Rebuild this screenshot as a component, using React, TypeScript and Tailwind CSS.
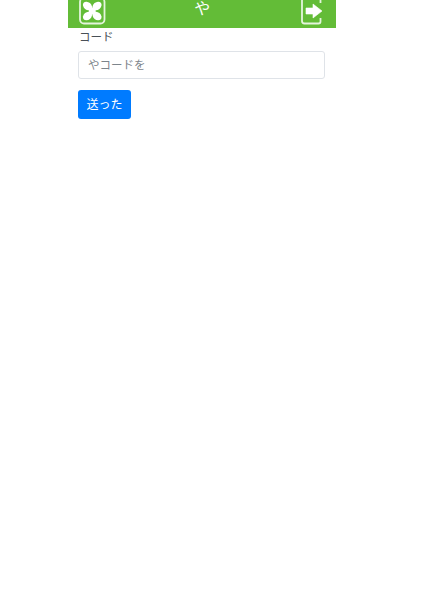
import React from 'react';

const FONT = { fontFamily: '"Liberation Sans", "Noto Sans CJK JP", sans-serif' };

const FanIcon = () => (
  <svg width="27" height="28" viewBox="0 0 27 28" className="shrink-0">
    <rect x="1" y="1" width="24.500" height="25.500" rx="4" fill="none" stroke="#e4f4dc" strokeWidth="1.800" />
    <g fill="#ffffff">
      <ellipse cx="8.500" cy="9" rx="5" ry="3.800" transform="rotate(40 8.500 9)" />
      <ellipse cx="18" cy="9" rx="5" ry="3.800" transform="rotate(-40 18 9)" />
      <ellipse cx="18" cy="19" rx="5" ry="3.800" transform="rotate(40 18 19)" />
      <ellipse cx="8.500" cy="19" rx="5" ry="3.800" transform="rotate(-40 8.500 19)" />
      <circle cx="13.250" cy="14" r="3.500" />
    </g>
  </svg>
);

const ExitIcon = () => (
  <svg width="22" height="28" viewBox="0 0 22 28" className="shrink-0">
    <path
      d="M19.500 6V3C19.500 1.800 18.700 1 17.500 1H3.500C2 1 1 2 1 3.500V24C1 25.500 2 26.500 3.500 26.500H17.500C18.700 26.500 19.500 25.700 19.500 24.500V21"
      fill="none"
      stroke="#e4f4dc"
      strokeWidth="1.800"
    />
    <path d="M5 11H12V7L21 14L12 21V17H5Z" fill="#ffffff" stroke="#ffffff" strokeWidth="0.600" strokeLinejoin="round" />
  </svg>
);

export default function App() {
  return (
    <div className="w-[422px] h-[600px] bg-white overflow-hidden" style={FONT}>
      <div className="ml-[68px] w-[268px]">
        <div className="h-[28px] bg-[#63bc37] flex items-end justify-between pl-[10.500px] pr-[13px] pb-[3px] overflow-hidden">
          <FanIcon />
          <span className="text-white text-[16px] leading-[24px] mb-[4px] mr-[2px]">や</span>
          <ExitIcon />
        </div>
        <div className="pl-[10px] pr-[11px]">
          <label className="block pl-[1px] text-[11.500px] leading-[19px] text-[#495057]">コード</label>
          <input
            readOnly
            placeholder="やコードを"
            className="block mt-[4px] w-full h-[28px] px-[9px] text-[11.500px] rounded-[3px] border border-[#dfe3e8] bg-white placeholder:text-[#7d858c] outline-none"
          />
          <button className="block mt-[11px] w-[53px] h-[29px] pt-[1px] rounded-[3px] bg-[#007bff] text-white text-[12px]">
            送った
          </button>
        </div>
      </div>
    </div>
  );
}
